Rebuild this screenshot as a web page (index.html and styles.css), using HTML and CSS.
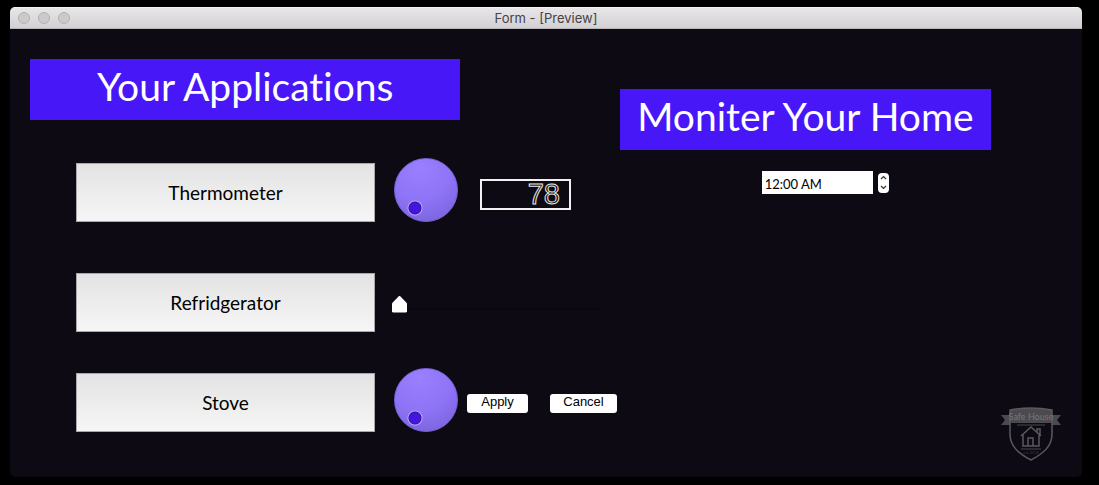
FILE: index.html
```html
<!DOCTYPE html>
<html lang="en">
<head>
	<meta charset="UTF-8">
	<title>Form - [Preview]</title>
	<link rel="stylesheet" href="styles.css">
</head>
<body>
	<div class="window">
		<header class="titlebar">
			<div class="lights">
				<button class="light" aria-label="Close"></button>
				<button class="light" aria-label="Minimize"></button>
				<button class="light" aria-label="Zoom"></button>
			</div>
			<span class="title">Form - [Preview]</span>
		</header>
		<main class="form">
			<section class="apps">
				<h1 class="banner">Your Applications</h1>
				<div class="row first">
					<button class="app">Thermometer</button>
					<input class="dial" type="range" aria-label="Temperature" value="78">
					<output class="lcd">78</output>
				</div>
				<div class="row second">
					<button class="app">Refridgerator</button>
					<input class="slider" type="range" aria-label="Refridgerator level" value="0">
				</div>
				<div class="row third">
					<button class="app">Stove</button>
					<input class="dial" type="range" aria-label="Stove heat" value="0">
					<div class="actions">
						<button class="push">Apply</button>
						<button class="push cancel">Cancel</button>
					</div>
				</div>
			</section>
			<section class="monitor">
				<h1 class="banner">Moniter Your Home</h1>
				<div class="time">
					<input class="clock" type="text" aria-label="Time" value="12:00 AM">
					<div class="stepper">
						<button class="step" aria-label="Later"><svg width="7" height="5" viewBox="0 0 7 5"><path d="M1 4L3.500 1.500L6 4"/></svg></button>
						<button class="step" aria-label="Earlier"><svg width="7" height="5" viewBox="0 0 7 5"><path d="M1 1L3.500 3.500L6 1"/></svg></button>
					</div>
				</div>
				<svg class="logo" width="62" height="56" viewBox="0 0 62 56" role="img" aria-label="Safe House">
					<path class="fill" d="M1 10H10V5Q31 1 52 5V10H61L57 15L61 20H52V18H10V20H1L5 15Z"/>
					<path class="line" d="M10 5Q31 1 52 5V29C52 41 44 48 31 55C18 48 10 41 10 29Z"/>
					<path class="thin" d="M17 20H45"/>
					<path class="line" d="M21 31L31 22L41 31M23 30V41H39V30M37 27V24H40V30M28 41V33H33V41"/>
					<path class="thin" d="M21 44H41"/>
					<text class="name" x="31" y="15">Safe House</text>
					<text class="est" x="31" y="49">est 2016</text>
				</svg>
			</section>
		</main>
	</div>
</body>
</html>
```

FILE: styles.css
```css
* {
	box-sizing: border-box;
}
body {
	display: flex;
	min-height: 100vh;
	margin: 0;
	padding: 7px 17px 8px 10px;
	background: #000;
	font-family: "Century Gothic", Lato, sans-serif;
	font-variant-ligatures: none;
}
h1 {
	margin: 0;
	font-weight: normal;
}
button, input {
	margin: 0;
	padding: 0;
	border: 0;
	font-family: inherit;
}

.window {
	display: flex;
	flex: 1;
	flex-direction: column;
	overflow: hidden;
	border-radius: 5px;
	background: #0d0a14;
}

/* title bar */
.titlebar {
	display: grid;
	grid-template-columns: 1fr auto 1fr;
	align-items: center;
	height: 22px;
	padding: 0 8px;
	border-top: 1px solid #f4f3f4;
	border-bottom: 1px solid #b5b3b5;
	background: linear-gradient(#e8e6e8, #d2d0d2);
}
.lights {
	display: flex;
	gap: 8px;
}
.light {
	width: 12px;
	height: 12px;
	border: 1px solid #b3b1b3;
	border-radius: 50%;
	background: #cccacc;
}
.title {
	color: #454345;
	font: 13px/20px Inter, sans-serif;
}

/* form */
.form {
	display: grid;
	flex: 1;
	grid-template-columns: 4fr 3fr;
	padding: 30px 20px 16px;
}
.banner {
	height: 61px;
	background: #4817f8;
	color: #fff;
	font-size: 39px;
	line-height: 54px;
	text-align: center;
	white-space: nowrap;
}
.apps .banner {
	width: 73%;
}
.row {
	display: flex;
	align-items: flex-end;
	height: 64px;
	padding-left: 46px;
}
.first {
	margin-top: 38px;
}
.second {
	margin-top: 46px;
}
.third {
	margin-top: 36px;
}
.app {
	width: 299px;
	height: 59px;
	border: 1px solid #a9a9a9;
	background: linear-gradient(#e3e3e3, #f6f6f6);
	color: #000;
	font-size: 19px;
}
.dial {
	width: 64px;
	height: 64px;
	margin-left: 19px;
	border: 1px solid #7762d8;
	border-radius: 50%;
	appearance: none;
	background:
		radial-gradient(circle at 20px 49px, #4414e0 5px, #35189f 6px, #b9a6ff 7px, transparent 8px),
		radial-gradient(circle at 40% 15%, #9a80ff, #8e74f6 50%, #765fd6);
}
.dial::-webkit-slider-thumb {
	opacity: 0;
}
.lcd {
	width: 91px;
	height: 31px;
	margin: 0 0 12px 22px;
	padding-right: 9px;
	border: 2px solid #f2f2f2;
	color: transparent;
	font: 29px/27px "Liberation Sans", sans-serif;
	text-align: right;
	-webkit-text-stroke: 1px #e8e8e0;
}
.slider {
	width: 210px;
	height: 20px;
	margin: 0 0 18px 17px;
	appearance: none;
	background:
		linear-gradient(#0a0810, #0a0810) 0 14px / 100% 2px no-repeat,
		repeating-linear-gradient(90deg, #08060d 0 1px, transparent 1px 8px) 16px 0 / 186px 4px no-repeat;
}
.slider::-webkit-slider-thumb {
	width: 15px;
	height: 17px;
	appearance: none;
	clip-path: polygon(50% 0, 100% 45%, 100% 94%, 94% 100%, 6% 100%, 0 94%, 0 45%);
	background: #fff;
}
.actions {
	display: flex;
	gap: 22px;
	margin: 0 0 19px 9px;
}
.push {
	width: 61px;
	height: 19px;
	padding-bottom: 3px;
	border-radius: 3px;
	background: #fff;
	color: #000;
	font: 13px/16px "Liberation Sans", Arial, sans-serif;
}
.cancel {
	width: 67px;
}

/* monitor */
.monitor {
	display: flex;
	flex-direction: column;
	padding-top: 30px;
}
.monitor .banner {
	width: 84%;
}
.time {
	display: flex;
	align-items: center;
	gap: 5px;
	margin: 21px 0 0 142px;
}
.clock {
	width: 111px;
	height: 23px;
	padding: 3px 3px 0;
	background: #fff;
	color: #000;
	font-size: 13px;
}
.stepper {
	display: flex;
	flex-direction: column;
	width: 11px;
	height: 20px;
	border-radius: 4px;
	background: #fff;
}
.step {
	display: flex;
	flex: 1;
	align-items: center;
	justify-content: center;
	background: none;
}
.step path {
	fill: none;
	stroke: #333;
	stroke-width: 1.2;
}
.logo {
	align-self: flex-end;
	margin-top: auto;
}
.line, .thin {
	fill: none;
	stroke: #5b5a5e;
	stroke-width: 1.5;
}
.thin {
	stroke: #48474c;
	stroke-width: 1;
}
.fill {
	fill: #4b4a4e;
}
.name, .est {
	fill: #77767a;
	font-size: 9px;
	text-anchor: middle;
}
.est {
	fill: #39383e;
	font-size: 4px;
}
```
